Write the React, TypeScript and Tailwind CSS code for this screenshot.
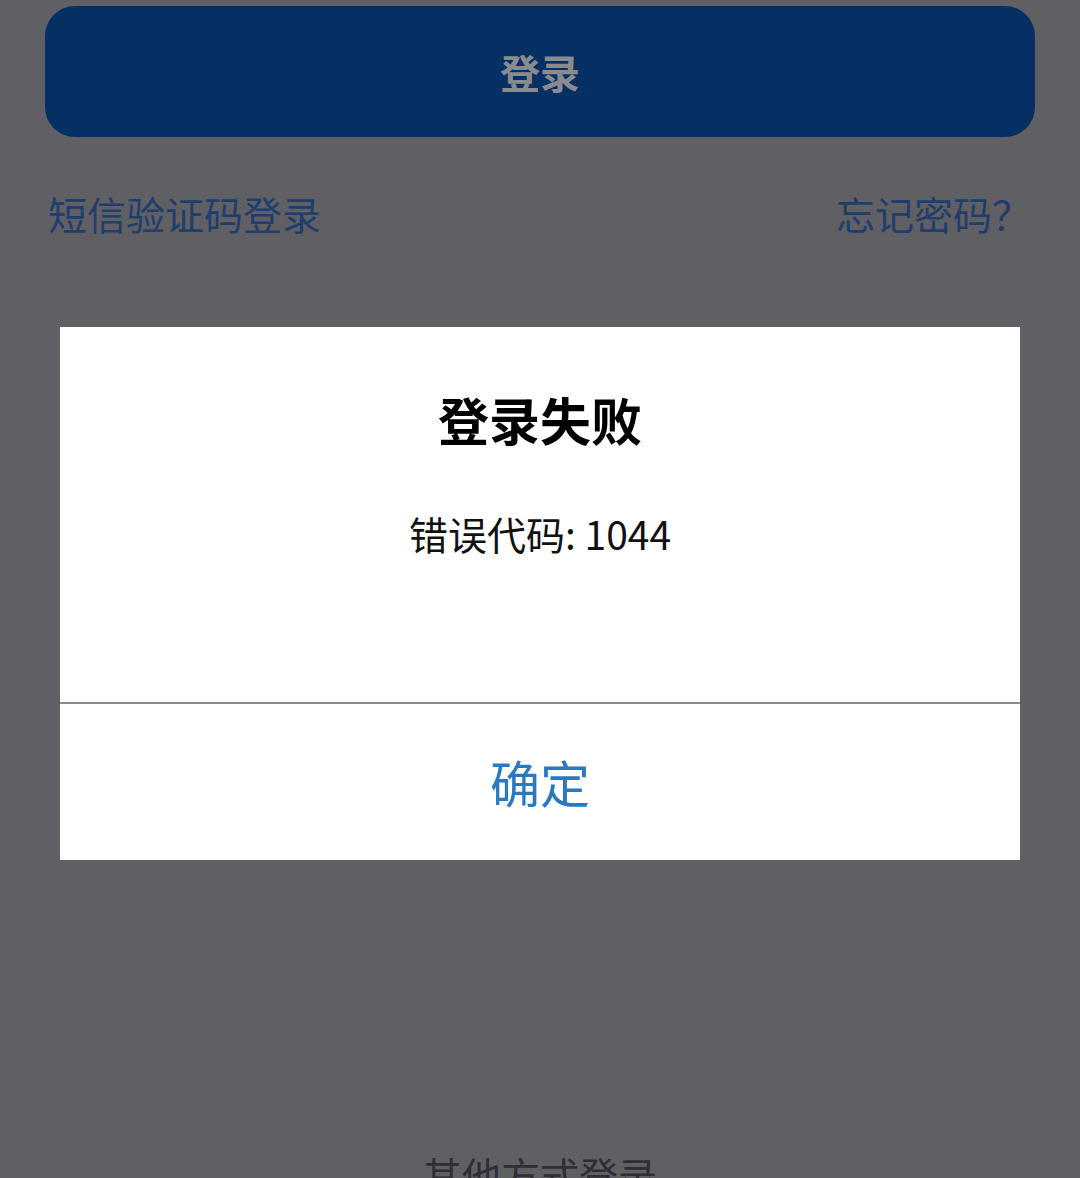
export default function App() {
  const font = { fontFamily: '"Noto Sans CJK SC", "Noto Sans", sans-serif' };

  return (
    <div className="relative w-[1080px] h-[1178px] overflow-hidden bg-[#5f5f64]" style={font}>
      {/* dimmed login page */}
      <div className="px-[45px] pt-[6px] flex flex-col">
        <button className="h-[131px] w-full rounded-[30px] bg-[#062f63] text-[40px] leading-none font-bold text-[#8a8b90]">
          登录
        </button>
        <div className="mt-[56px] flex items-center justify-between pl-[3px] pr-[4px]">
          <span className="text-[39px] leading-[40px] text-[#1f3e6c]">短信验证码登录</span>
          <span className="text-[39px] leading-[40px] text-[#1f3e6c]">忘记密码？</span>
        </div>
        <div className="mt-[921px] text-center text-[39px] leading-[40px] text-[#2e2e34]">其他方式登录</div>
      </div>

      {/* modal dialog */}
      <div className="absolute left-[60px] top-[327px] w-[960px] bg-white flex flex-col">
        <div className="h-[375px] flex flex-col items-center pt-[67px]">
          <div className="text-[51px] leading-[50px] font-bold text-black">登录失败</div>
          <div className="mt-[70px] text-[39px] leading-[38px] text-[#111]">错误代码: 1044</div>
        </div>
        <div className="h-[2px] bg-[#8a8a8a]" />
        <button className="h-[156px] w-full flex items-center justify-center pb-[2px] text-[50px] leading-none text-[#2a78c0]">
          确定
        </button>
      </div>
    </div>
  );
}
